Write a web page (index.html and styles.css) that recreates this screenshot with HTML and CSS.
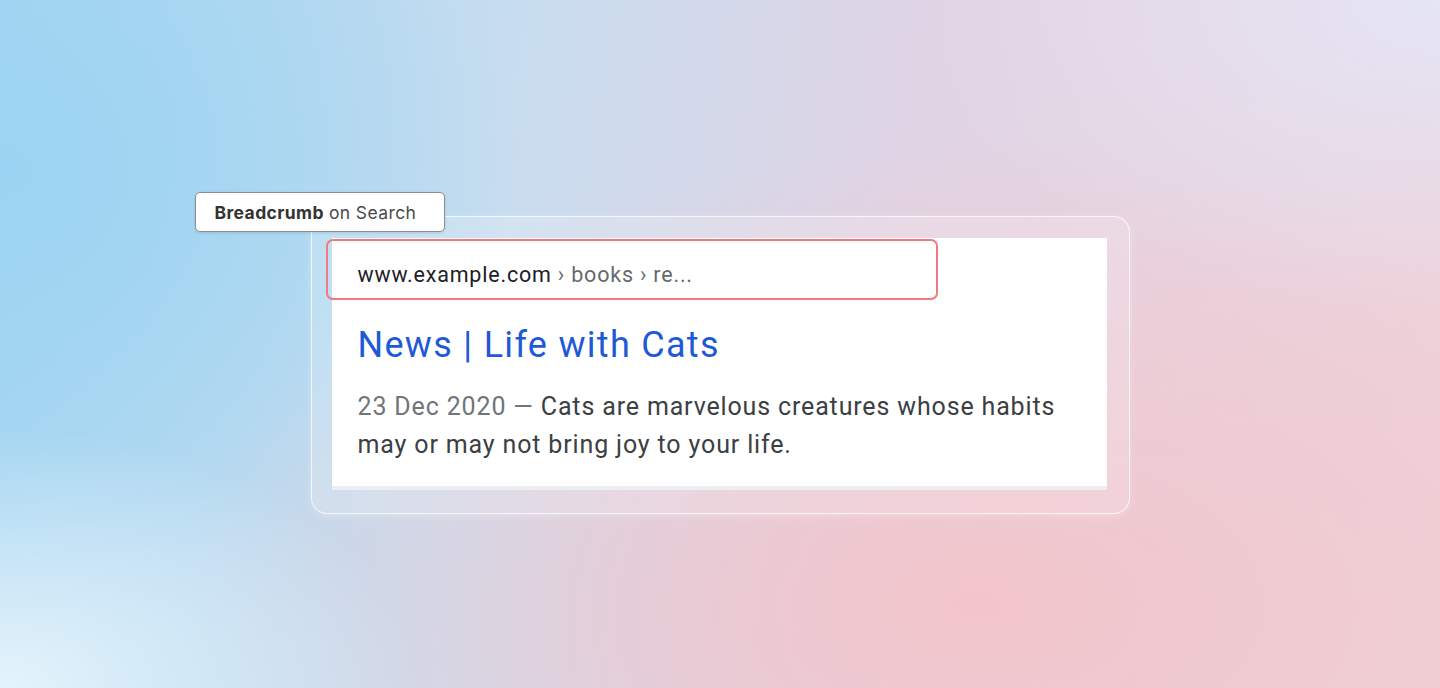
FILE: index.html
```html
<!DOCTYPE html>
<html lang="en">
<head>
<meta charset="utf-8">
<title>Breadcrumb on Search</title>
<link rel="stylesheet" href="styles.css">
</head>
<body>
<main class="stage">
  <section class="frame">
    <div class="tag"><strong>Breadcrumb</strong> on Search</div>
    <article class="result">
      <div class="crumb"><span class="domain">www.example.com</span> › books › re...</div>
      <h1 class="title">News | Life with Cats</h1>
      <p class="snippet"><span class="date">23 Dec 2020 — </span>Cats are marvelous creatures whose habits may or may not bring joy to your life.</p>
    </article>
  </section>
</main>
</body>
</html>
```

FILE: styles.css
```css
* { box-sizing: border-box; }
html, body { margin: 0; padding: 0; }
body {
  width: 1440px;
  height: 688px;
  overflow: hidden;
  font-family: Roboto, "Liberation Sans", sans-serif;
}
.stage {
  width: 1440px;
  height: 688px;
  display: flex;
  justify-content: center;
  padding-top: 216px;
  background:
    radial-gradient(ellipse 420px 260px at 0% 100%, rgba(232,245,252,0.95) 0%, rgba(232,245,252,0) 100%),
    radial-gradient(ellipse 520px 320px at 100% 0%, rgba(228,230,247,0.95) 0%, rgba(228,230,247,0) 100%),
    radial-gradient(ellipse 800px 460px at 68% 88%, rgba(243,196,201,0.95) 0%, rgba(243,196,201,0) 100%),
    radial-gradient(ellipse 520px 420px at 0% 25%, rgba(155,212,242,1) 0%, rgba(155,212,242,0) 100%),
    linear-gradient(100deg, #a6d6f2 0%, #c9ddef 35%, #e0d4e5 60%, #efd3da 100%);
}
.frame {
  position: relative;
  width: 819px;
  height: 298px;
  border: 1px solid rgba(255,255,255,0.75);
  border-radius: 16px;
  background: rgba(255,255,255,0.18);
  padding: 21px 22px 23px 20px;
  box-shadow: 0 2px 10px rgba(255,255,255,0.25);
}
.tag {
  position: absolute;
  left: -117px;
  top: -25px;
  width: 250px;
  height: 40px;
  display: flex;
  align-items: center;
  padding-left: 19px;
  background: #ffffff;
  border: 1px solid #8e8e92;
  border-radius: 5px;
  font-family: Inter, "Liberation Sans", sans-serif;
  font-size: 17.5px;
  letter-spacing: 0.4px;
  color: #4a4a4a;
  box-shadow: 0 1px 3px rgba(0,0,0,0.12);
  z-index: 2;
}
.tag strong { color: #333; font-weight: 700; margin-right: 5px; }
.result {
  width: 775px;
  height: 252px;
  background: #ffffff;
  border-bottom: 4px solid #eceef1;
  padding-top: 1px;
}
.crumb {
  margin-left: -6px;
  width: 612px;
  height: 61px;
  border: 2px solid #f07a7f;
  border-radius: 7px;
  padding: 21px 0 0 30px;
  font-size: 21.5px;
  letter-spacing: 0.8px;
  line-height: 26px;
  color: #666a6e;
  white-space: nowrap;
}
.domain { color: #202124; }
.title {
  margin: 22px 0 0 26px;
  font-size: 36px;
  letter-spacing: 1.3px;
  line-height: 46px;
  font-weight: 400;
  color: #1f5ad6;
  white-space: nowrap;
}
.snippet {
  margin: 20px 0 0 26px;
  width: 718px;
  font-size: 25px;
  letter-spacing: 0.85px;
  line-height: 38px;
  color: #3c4043;
}
.date { color: #70757a; }
```
